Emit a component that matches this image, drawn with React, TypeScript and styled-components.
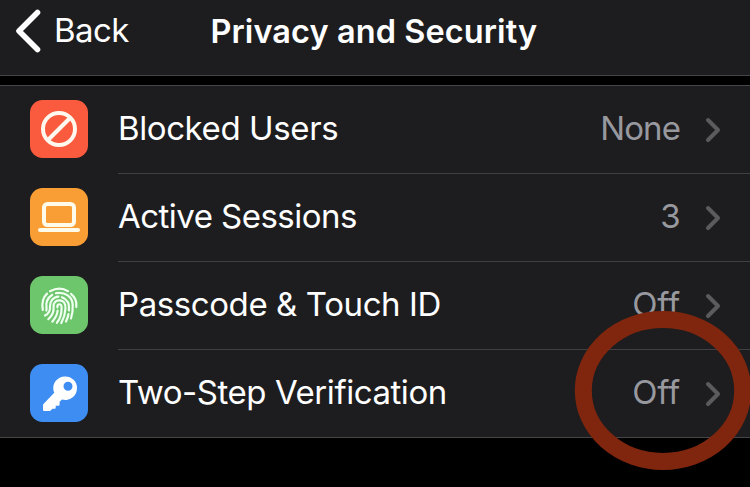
import React from 'react';
import styled, { createGlobalStyle } from 'styled-components';

const GlobalStyle = createGlobalStyle`
  * { box-sizing: border-box; }
  body {
    margin: 0;
    background: #000;
    font-family: Inter, "Liberation Sans", sans-serif;
    overflow: hidden;
  }
`;

const Screen = styled.main`
  position: relative;
  width: 750px;
  height: 487px;
  overflow: hidden;
  background: #000;
  color: #fff;
`;

const NavBar = styled.header`
  display: grid;
  grid-template-columns: 210.5px 1fr;
  align-items: start;
  height: 76px;
  background: #1d1d1f;
  border-bottom: 1px solid #464649;
`;

const BackButton = styled.button`
  display: flex;
  align-items: center;
  gap: 12px;
  height: 60px;
  padding: 0 0 0 14px;
  border: 0;
  background: none;
  color: #fff;
  font: 400 33px/60px Inter, "Liberation Sans", sans-serif;
  letter-spacing: -0.6px;

  svg { margin-top: 2px; }
`;

const Title = styled.h1`
  margin: 0;
  font-size: 32.5px;
  font-weight: 600;
  line-height: 63px;
  letter-spacing: 0.08px;
  white-space: nowrap;
`;

const Group = styled.section`
  margin-top: 9px;
  background: #1d1d1f;
  border-top: 1px solid #464649;
  border-bottom: 1px solid #464649;
`;

const Row = styled.div`
  display: flex;
  height: 88px;
  padding-left: 30px;

  &:last-child { height: 87px; }
`;

const Tile = styled.span<{ $color: string }>`
  flex: none;
  width: 58px;
  height: 58px;
  margin: 14px 30px 0 0;
  border-radius: 12.5px;
  background: ${(p) => p.$color};

  svg { display: block; }
`;

const RowBody = styled.div`
  display: flex;
  flex: 1;
  align-items: flex-start;
  padding: 0 28px 0 0;
  border-bottom: 1px solid #414144;

  ${Row}:last-child & { border-bottom: 0; }
`;

const Label = styled.span<{ $tracking: number }>`
  flex: 1;
  font-size: 33px;
  line-height: 85px;
  letter-spacing: ${(p) => p.$tracking}px;
  white-space: nowrap;
`;

const Value = styled.span<{ $tracking: number }>`
  margin-right: 24px;
  color: #98989f;
  font-size: 33px;
  line-height: 85px;
  letter-spacing: ${(p) => p.$tracking}px;
`;

const Disclosure = styled.svg`
  flex: none;
  width: 18px;
  height: 28px;
  margin-top: 30px;
`;

const Highlight = styled.svg`
  position: absolute;
  left: 570px;
  top: 306px;
  pointer-events: none;
`;

const BlockedIcon = () => (
  <svg width="58" height="58" viewBox="0 0 58 58" fill="none" stroke="#fff8ee" strokeWidth="4">
    <circle cx="29" cy="29" r="16" />
    <path d="M18 40 40 18" />
  </svg>
);

const LaptopIcon = () => (
  <svg width="58" height="58" viewBox="0 0 58 58" fill="none" stroke="#fffbea" strokeWidth="4">
    <rect x="14" y="16" width="30" height="21" rx="3.5" />
    <path d="M10 42H48" strokeLinecap="round" />
  </svg>
);

const FingerprintIcon = () => (
  <svg
    width="58"
    height="58"
    viewBox="0 0 58 58"
    fill="none"
    stroke="#effff0"
    strokeWidth="2.2"
    strokeLinecap="round"
  >
    <path d="M20 15.2C26 12 33 12 38 15.2" />
    <path d="M12.8 34C11.5 27 13 21.5 17 17.6" />
    <path d="M41 17.8C45.5 21.5 47 26 46.3 31" />
    <path d="M16.3 34.5C17.3 32 15.3 29 17 25C18.2 22 20 20 22.3 18.7" />
    <path d="M26 17.2C35 15.5 42.6 21 42.7 29C42.9 34 42.2 39 41 42.5" />
    <path d="M15 39.5C19 37.5 20.5 34.5 20 30.5C19.8 25 23.5 20.8 28.5 20.6" />
    <path d="M32 21.2C38 23.4 39.6 28.5 38.9 34.5M38.5 38C38 41 37 43.5 36 45.5" />
    <path d="M18.3 43.2C23 39 24 35.5 23.6 31C23 26.5 26 24.2 29.5 24.3C34.5 24.5 35.8 28.5 35.4 33C35.2 38 33.5 43 31.3 47" />
    <path d="M22.3 45.7C25 42.5 27.5 38.5 27.6 34.5M27.4 31.3C26.9 27.2 31.5 27.2 31.6 31.5C31.7 37.5 30 43 26.9 46.8" />
  </svg>
);

const KeyIcon = () => (
  <svg width="58" height="58" viewBox="0 0 58 58">
    <path
      fill="#fff"
      fillRule="evenodd"
      d="M35.3 12.4A11.7 11.7 0 0 1 47 24.1A11.7 11.7 0 0 1 32 35.5L29.6 37.7V40.7Q29.6 41.7 28.6 41.7H25.7V43.8Q25.7 44.7 24.8 44.7H22.5L20.7 46.6Q20.3 47 19.7 47H14Q13 47 13 46V41.2Q13 40.5 13.5 40L24.2 28.8A11.7 11.7 0 0 1 35.3 12.4ZM38 17.8A4.5 4.5 0 1 0 38 26.8A4.5 4.5 0 1 0 38 17.8Z"
    />
  </svg>
);

const rows = [
  { label: 'Blocked Users', tracking: -0.4, value: 'None', valueTracking: -0.9, color: '#fa5a3e', Icon: BlockedIcon },
  { label: 'Active Sessions', tracking: -0.53, value: '3', valueTracking: -0.7, color: '#f99d35', Icon: LaptopIcon },
  { label: 'Passcode & Touch ID', tracking: -0.41, value: 'Off', valueTracking: -0.2, color: '#6dc66c', Icon: FingerprintIcon },
  { label: 'Two-Step Verification', tracking: -0.45, value: 'Off', valueTracking: -0.2, color: '#3e8df3', Icon: KeyIcon },
];

export default function App() {
  return (
    <Screen>
      <GlobalStyle />
      <NavBar>
        <BackButton>
          <svg width="28" height="46" viewBox="0 0 28 46" fill="none">
            <path d="M23.5 4.5 5 23 23.5 41.5" stroke="#fff" strokeWidth="5.6" strokeLinecap="round" strokeLinejoin="round" />
          </svg>
          Back
        </BackButton>
        <Title>Privacy and Security</Title>
      </NavBar>
      <Group>
        {rows.map(({ label, tracking, value, valueTracking, color, Icon }) => (
          <Row key={label}>
            <Tile $color={color}>
              <Icon />
            </Tile>
            <RowBody>
              <Label $tracking={tracking}>{label}</Label>
              <Value $tracking={valueTracking}>{value}</Value>
              <Disclosure viewBox="0 0 18 28" fill="none">
                <path d="M4 4 14 14 4 24" stroke="#5b5b5e" strokeWidth="4" strokeLinecap="round" strokeLinejoin="round" />
              </Disclosure>
            </RowBody>
          </Row>
        ))}
      </Group>
      <Highlight width="182" height="170" viewBox="0 0 182 170">
        <ellipse cx="93" cy="84.5" rx="79.7" ry="71" fill="none" stroke="#80260e" strokeWidth="17" />
      </Highlight>
    </Screen>
  );
}
